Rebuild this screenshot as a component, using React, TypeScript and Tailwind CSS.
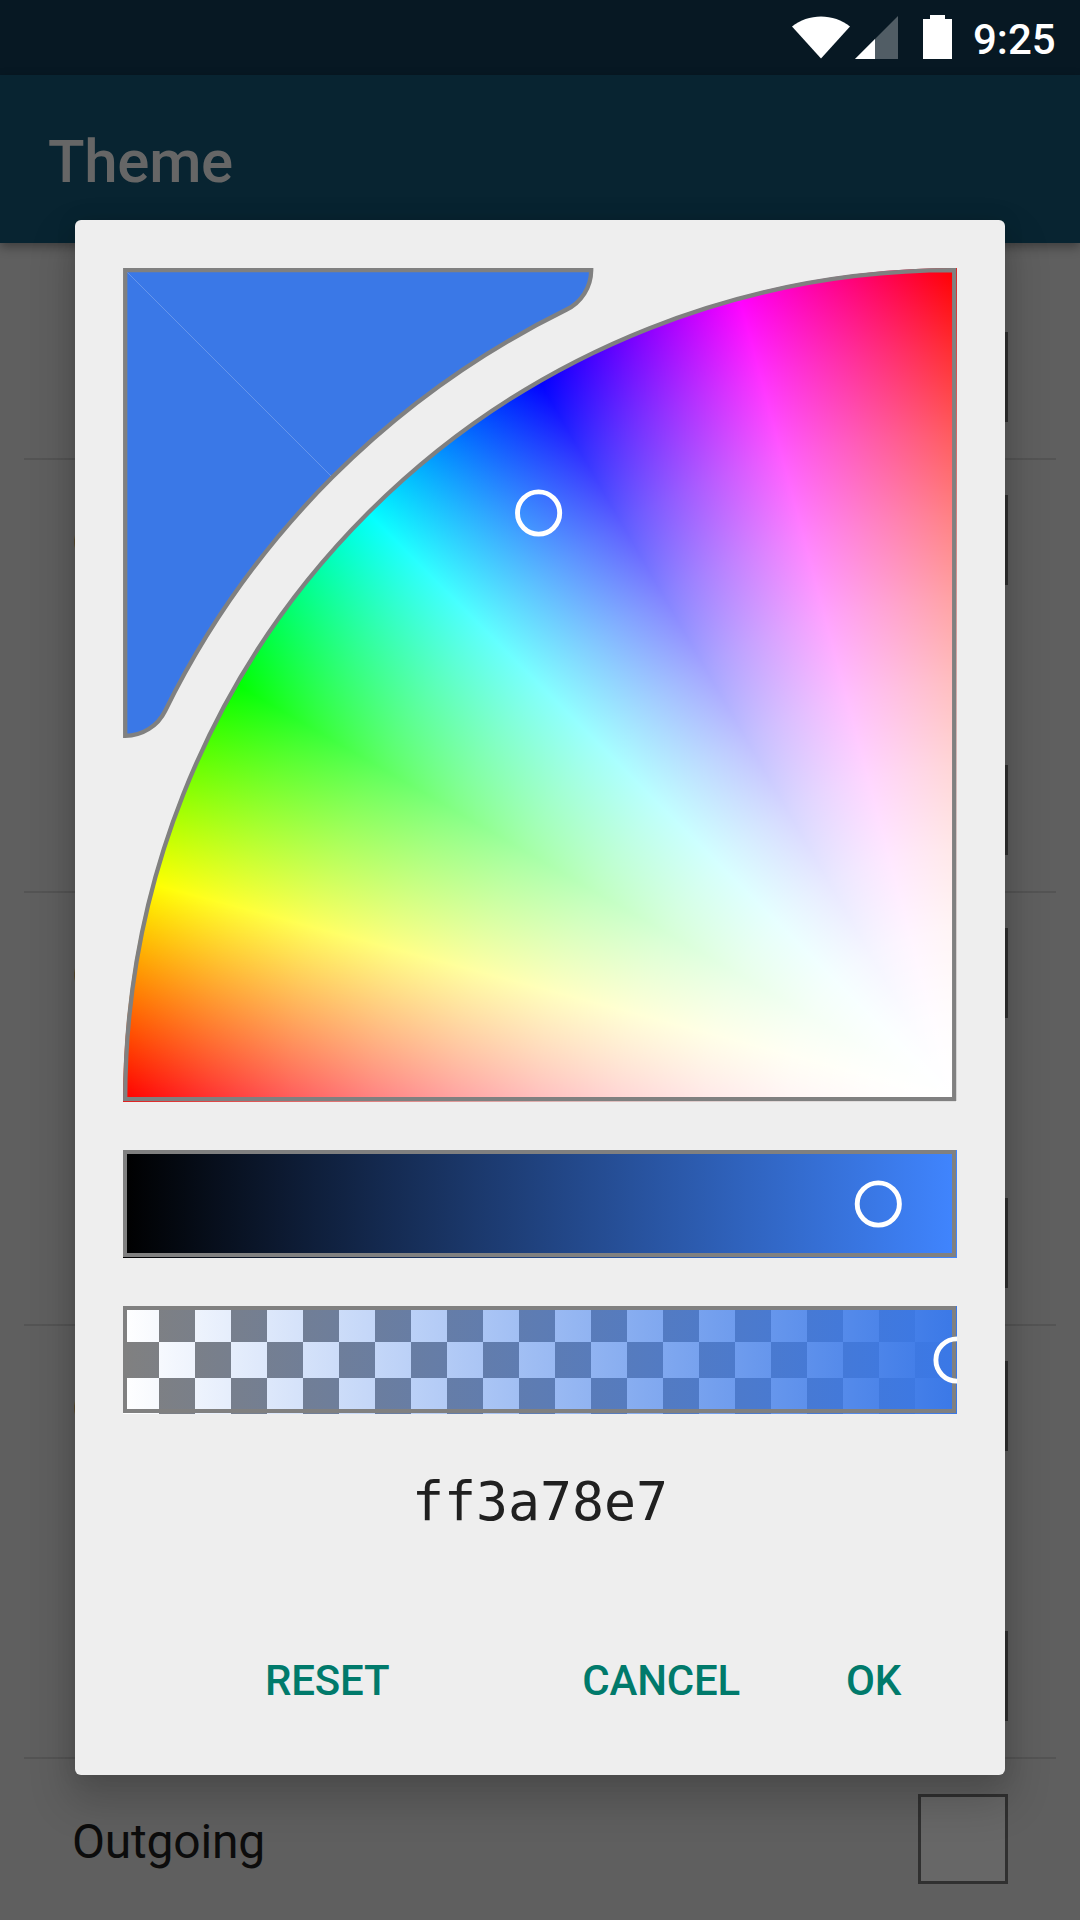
import React from "react";

const RING = { fill: "none", stroke: "#fff", strokeWidth: 4.9 };

function StatusBar() {
  return (
    <header className="flex h-[75px] shrink-0 items-start bg-[#071823] pl-[790px] text-white">
      <svg className="mt-[14px] h-[46px] w-[164px] shrink-0" viewBox="790 14 164 46">
        <path d="M792 26.5C808 13 834 13 850 26.5L821 58.5Z" fill="#fff" />
        <path d="M855 59L898 16V59Z" fill="#fff" fillOpacity="0.3" />
        <path d="M855 59L875 39V59Z" fill="#fff" />
        <path d="M923 19h7v-4h15v4h7v40h-29Z" fill="#fff" />
      </svg>
      <span className="ml-[19px] mt-[16px] text-[42px] leading-[48px] font-medium whitespace-nowrap">9:25</span>
    </header>
  );
}

function Row({ label, className }: { label?: string; className: string }) {
  return (
    <div className={`flex shrink-0 items-center justify-between pr-[72px] pl-[72px] ${className}`}>
      <span className="pt-[6px] text-[48px] leading-[56px] tracking-[-0.2px] text-[#0c0c0c]">{label}</span>
      <span className="size-[90px] border-[3px] border-[#303030] bg-[#676767]" />
    </div>
  );
}

function Divider() {
  return <div className="mx-[24px] h-[2px] shrink-0 bg-[#545454]" />;
}

function Group() {
  return (
    <section className="flex h-[433px] shrink-0 flex-col">
      <Divider />
      <Row label="Outgoing" className="mt-[35px] h-[90px]" />
      <Row className="mt-[180px] h-[90px]" />
    </section>
  );
}

function ColorWheel() {
  return (
    <div className="relative h-[834px] w-[834px]">
      <div className="h-[834px] w-[834px] rounded-tl-[834px] bg-[radial-gradient(circle_830px_at_831px_831px,rgb(255_255_255/1)_0%,rgb(255_255_255/0.9975)_5%,rgb(255_255_255/0.99)_10%,rgb(255_255_255/0.96)_20%,rgb(255_255_255/0.91)_30%,rgb(255_255_255/0.84)_40%,rgb(255_255_255/0.75)_50%,rgb(255_255_255/0.64)_60%,rgb(255_255_255/0.51)_70%,rgb(255_255_255/0.36)_80%,rgb(255_255_255/0.19)_90%,rgb(255_255_255/0)_100%),conic-gradient(from_270deg_at_831px_831px,#f00_0deg,#ff0_15deg,#0f0_30deg,#0ff_45deg,#00f_60deg,#f0f_75deg,#f00_90deg,#f00_225deg,#f00_360deg)]" />
      <svg className="absolute top-0 left-0 h-[834px] w-[834px]" viewBox="123 268 834 834">
        <path
          d="M125.2 1099.2A829 829 0 0 1 954.2 270.2V1099.2Z"
          fill="none"
          stroke="#808080"
          strokeWidth="4.3"
        />
        <path
          d="M125.2 270.2H591.2A44.4 44.4 0 0 1 566.2 309.8A879.5 879.5 0 0 0 165.2 710.8A44.4 44.4 0 0 1 125.2 735.8Z"
          fill="#3a78e7"
          stroke="#808080"
          strokeWidth="4.3"
        />
        <path d="M127.5 272.5L331 476" stroke="#fff" strokeOpacity="0.22" />
        <circle cx="538.6" cy="513" r="21.1" {...RING} />
      </svg>
    </div>
  );
}

function ValueBar() {
  return (
    <div className="mt-[48px] h-[108px] w-[834px]">
      <svg className="block" width="834" height="108">
        <defs>
          <linearGradient id="value">
            <stop stopColor="#000" />
            <stop offset="1" stopColor="#4085ff" />
          </linearGradient>
        </defs>
        <rect width="834" height="108" fill="url(#value)" />
        <rect x="2" y="2" width="829" height="103" fill="none" stroke="#808080" strokeWidth="4" />
        <circle cx="755.3" cy="54" r="21.1" {...RING} />
      </svg>
    </div>
  );
}

function AlphaBar() {
  return (
    <div className="mt-[48px] h-[108px] w-[834px]">
      <svg className="block" width="834" height="108">
        <defs>
          <pattern id="checker" width="72" height="72" patternUnits="userSpaceOnUse">
            <rect width="72" height="72" fill="#fff" />
            <path d="M36 0h36v36h-36zM0 36h36v36h-36z" fill="#808080" />
          </pattern>
          <linearGradient id="alpha">
            <stop stopColor="#3a78e7" stopOpacity="0" />
            <stop offset="1" stopColor="#3a78e7" />
          </linearGradient>
        </defs>
        <rect width="834" height="108" fill="url(#checker)" />
        <rect width="834" height="108" fill="url(#alpha)" />
        <rect x="2" y="2" width="829" height="103" fill="none" stroke="#808080" strokeWidth="4" />
        <circle cx="834" cy="54" r="21.1" {...RING} />
      </svg>
    </div>
  );
}

function Dialog() {
  return (
    <div className="absolute top-[220px] left-[75px] flex h-[1555px] w-[930px] flex-col rounded-[6px] bg-[#eee] px-[48px] pt-[48px] shadow-[0_22px_40px_6px_rgba(0,0,0,0.18),0_0_20px_rgba(0,0,0,0.1)]">
      <ColorWheel />
      <ValueBar />
      <AlphaBar />
      <div className="mt-[56px] text-center font-['DejaVu_Sans_Mono',monospace] text-[53.2px] leading-[64px] text-[#202020]">
        ff3a78e7
      </div>
      <div className="mt-[122px] flex text-[42px] leading-[50px] font-medium tracking-[-0.2px] text-[#007a6b]">
        <button className="ml-[142px]">RESET</button>
        <button className="ml-[193px]">CANCEL</button>
        <button className="ml-[106px]">OK</button>
      </div>
    </div>
  );
}

export default function App() {
  return (
    <div className="relative flex h-[1920px] w-[1080px] flex-col overflow-hidden bg-[#5f5f5f] font-[Roboto,sans-serif]">
      <StatusBar />
      <div className="z-0 flex h-[168px] shrink-0 items-center bg-[#082431] pt-[5px] pl-[48px] shadow-[0_4px_10px_rgba(0,0,0,0.35)]">
        <h1 className="text-[60px] leading-[70px] font-medium tracking-[-0.3px] text-[#666]">Theme</h1>
      </div>
      <main className="flex flex-col">
        <Row className="mt-[89px] mb-[36px] h-[90px]" />
        <Group />
        <Group />
        <Group />
        <Group />
      </main>
      <Dialog />
    </div>
  );
}
